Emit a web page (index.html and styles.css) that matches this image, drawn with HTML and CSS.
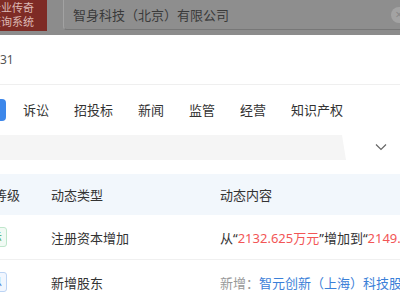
FILE: index.html
```html
<!DOCTYPE html>
<html lang="zh-CN">
<head>
    <meta charset="UTF-8">
    <meta name="viewport" content="width=device-width, initial-scale=1.0">
    <title>企业动态</title>
    <link rel="stylesheet" href="styles.css">
</head>
<body>
    <div class="page">
        <header class="topbar">
            <div class="logo">企业传奇<br>查询系统</div>
            <div class="search">
                <span class="search-text">智身科技（北京）有限公司</span>
                <span class="clear">×</span>
            </div>
        </header>

        <div class="info">31</div>

        <nav class="tabs">
            <span class="tab active">动态</span>
            <span class="tab">诉讼</span>
            <span class="tab">招投标</span>
            <span class="tab">新闻</span>
            <span class="tab">监管</span>
            <span class="tab">经营</span>
            <span class="tab">知识产权</span>
        </nav>

        <div class="filter-bar">
            <div class="filter"></div>
            <svg class="chevron" width="12" height="8" viewBox="0 0 12 8">
                <path d="M1 1.5 L6 6.5 L11 1.5" fill="none" stroke="#666" stroke-width="1.2"/>
            </svg>
        </div>

        <div class="list">
            <div class="row head">
                <div class="cell level">等级</div>
                <div class="cell">动态类型</div>
                <div class="cell">动态内容</div>
            </div>
            <div class="row">
                <div class="cell level"><span class="badge green">提示</span></div>
                <div class="cell">注册资本增加</div>
                <div class="cell content">从“<span class="red">2132.625万元</span>”增加到“<span class="red">2149.5万元</span>”</div>
            </div>
            <div class="row">
                <div class="cell level"><span class="badge blue">信息</span></div>
                <div class="cell">新增股东</div>
                <div class="cell content"><span class="grey">新增：</span><span class="link">智元创新（上海）科技股份有限公司</span></div>
            </div>
        </div>
    </div>
</body>
</html>
```

FILE: styles.css
```css
body {
    margin: 0;
    overflow: hidden;
    font-family: "Noto Sans", "Noto Sans CJK SC", sans-serif;
    font-size: 13px;
    color: #333;
    background: white;
}
.page {
    width: 640px;
    margin-left: -40px;
}

/* 顶部（被遮罩压暗） */
.topbar {
    display: flex;
    height: 35px;
    background: #8c8c8c;
}
.logo {
    width: 74px;
    height: 30px;
    padding-right: 13px;
    padding-top: 1px;
    background: #7e2b25;
    color: #dcb8b3;
    font-size: 11px;
    line-height: 14px;
    text-align: right;
}
.search {
    flex: 1;
    display: flex;
    align-items: center;
    justify-content: space-between;
    width: 0;
    height: 30px;
    margin-left: 16px;
    padding-left: 9px;
    border: 1px solid #a2a2a2;
    border-top: none;
    border-bottom-color: #777;
    border-radius: 0 0 4px 4px;
    background: #8e8e8e;
    box-sizing: border-box;
}
.search-text {
    color: #3a3a3a;
    font-size: 13px;
}
.clear {
    display: flex;
    align-items: center;
    justify-content: center;
    width: 16px;
    height: 16px;
    margin-right: 192px;
    border-radius: 50%;
    background: #a3a3a3;
    color: #888;
    font-size: 13px;
    line-height: 1;
}

.info {
    height: 49px;
    line-height: 49px;
    padding-left: 40px;
    font-size: 12px;
    color: #555;
    border-bottom: 1px solid #efefef;
}

/* 标签页 */
.tabs {
    display: flex;
    align-items: center;
    gap: 9px;
    height: 50px;
    padding-left: 4px;
}
.tab {
    padding: 0 8px;
    line-height: 22px;
    color: #333;
}
.tab.active {
    background: #3d87ea;
    color: white;
    border-radius: 4px;
}

.filter-bar {
    display: flex;
    align-items: center;
    height: 25px;
}
.filter {
    width: 386px;
    height: 25px;
    background: #f5f5f5;
    clip-path: polygon(0 0, 382px 0, 386px 100%, 0 100%);
}
.chevron {
    margin-left: 29px;
    margin-top: -1px;
}

/* 动态列表 */
.list {
    margin-top: 14px;
}
.row {
    display: grid;
    grid-template-columns: 91px 169px 1fr;
    align-items: center;
    height: 44px;
    border-bottom: 1px solid #f0f0f0;
    white-space: nowrap;
}
.row.head {
    height: 41px;
    background: #f2f7fc;
    border-bottom: none;
}
.row.head .level {
    padding-left: 34px;
}
.badge {
    display: inline-block;
    width: 30px;
    margin-left: 15px;
    line-height: 18px;
    border-radius: 3px;
    font-size: 11px;
    text-align: center;
}
.badge.green {
    background: #f1faf4;
    border: 1px solid #bfe6cb;
    color: #3aa55c;
}
.badge.blue {
    background: #f1f6fe;
    border: 1px solid #bcd4f4;
    color: #3d7fd6;
}
.content {
    overflow: hidden;
}
.red {
    color: #f25656;
}
.grey {
    color: #999;
}
.link {
    color: #3b80d8;
}
```
